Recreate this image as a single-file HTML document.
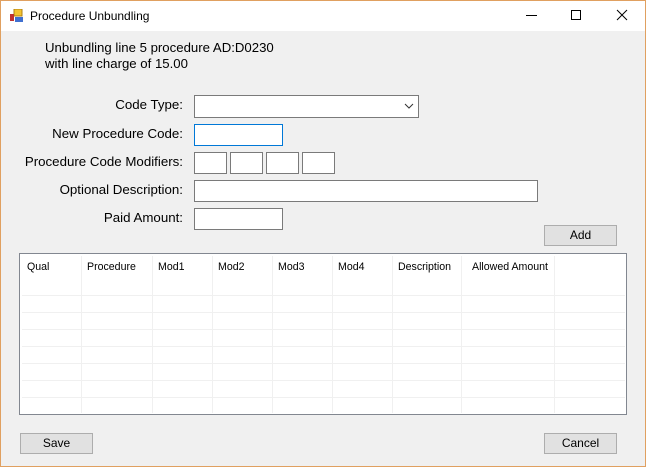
<!DOCTYPE html>
<html><head><style>
*{box-sizing:border-box;margin:0;padding:0}
body{width:646px;height:467px;background:#f0f0f0;font-family:"Liberation Sans",sans-serif;font-size:12px;color:#000;position:relative;overflow:hidden}
.a{position:absolute}
.frame{left:0;top:0;width:646px;height:467px;border:1px solid #e0a060;border-top-width:1px}
.title{left:1px;top:1px;width:644px;height:30px;background:#fff}
.lbl{position:absolute;right:463px;white-space:nowrap;font-size:13.3px}
.box{position:absolute;background:#fff;border:1px solid #7a7a7a}
.btn{position:absolute;background:#e1e1e1;border:1px solid #adadad;text-align:center;line-height:19px;font-size:12px}
.grid{left:19px;top:253px;width:608px;height:162px;background:#fff;border:1px solid #828790}
.h{position:absolute;top:7px;font-size:10.6px}
.vl{position:absolute;width:1px;background:#f0f0f0}
.hl{position:absolute;height:1px;background:#f0f0f0;left:2px;width:603px}
</style></head><body>
<div class="a title"></div>
<div class="a frame"></div>
<svg class="a" style="left:10px;top:9px" width="14" height="14" viewBox="0 0 14 14">
<rect x="4" y="0" width="8" height="7" fill="#f4c430" stroke="#b08010"/>
<rect x="0" y="5" width="4" height="7" fill="#c03030"/>
<rect x="5" y="8" width="8" height="5" fill="#4070d0"/>
</svg>
<div class="a" style="left:30px;top:9px;font-size:12px">Procedure Unbundling</div>
<div class="a" style="left:526px;top:15px;width:11px;height:1px;background:#000"></div>
<div class="a" style="left:571px;top:10px;width:10px;height:10px;border:1px solid #000"></div>
<svg class="a" style="left:616px;top:9px" width="12" height="12"><path d="M1 1L11 11M11 1L1 11" stroke="#000" stroke-width="1"/></svg>

<div class="a" style="left:45px;top:40px;font-size:13.2px;line-height:16px">Unbundling line 5 procedure AD:D0230<br>with line charge of 15.00</div>

<div class="lbl" style="top:97px">Code Type:</div>
<div class="box" style="left:194px;top:95px;width:225px;height:23px"></div>
<svg class="a" style="left:404px;top:103px" width="10" height="6"><path d="M1 1L5 5L9 1" stroke="#333" fill="none"/></svg>
<div class="lbl" style="top:126px">New Procedure Code:</div>
<div class="box" style="left:194px;top:124px;width:89px;height:22px;border-color:#0078d7"></div>
<div class="lbl" style="top:154px">Procedure Code Modifiers:</div>
<div class="box" style="left:194px;top:152px;width:33px;height:22px"></div>
<div class="box" style="left:230px;top:152px;width:33px;height:22px"></div>
<div class="box" style="left:266px;top:152px;width:33px;height:22px"></div>
<div class="box" style="left:302px;top:152px;width:33px;height:22px"></div>
<div class="lbl" style="top:182px">Optional Description:</div>
<div class="box" style="left:194px;top:180px;width:344px;height:22px"></div>
<div class="lbl" style="top:210px">Paid Amount:</div>
<div class="box" style="left:194px;top:208px;width:89px;height:22px"></div>

<div class="btn" style="left:544px;top:225px;width:73px;height:21px">Add</div>

<div class="a grid">
<div class="h" style="left:7px">Qual</div>
<div class="h" style="left:67px">Procedure</div>
<div class="h" style="left:138px">Mod1</div>
<div class="h" style="left:198px">Mod2</div>
<div class="h" style="left:258px">Mod3</div>
<div class="h" style="left:318px">Mod4</div>
<div class="h" style="left:378px">Description</div>
<div class="h" style="left:452px">Allowed Amount</div>
<div class="vl" style="left:61px;top:2px;height:157px"></div>
<div class="vl" style="left:132px;top:2px;height:157px"></div>
<div class="vl" style="left:192px;top:2px;height:157px"></div>
<div class="vl" style="left:252px;top:2px;height:157px"></div>
<div class="vl" style="left:312px;top:2px;height:157px"></div>
<div class="vl" style="left:372px;top:2px;height:157px"></div>
<div class="vl" style="left:441px;top:2px;height:157px"></div>
<div class="vl" style="left:534px;top:2px;height:157px"></div>
<div class="hl" style="top:41px"></div>
<div class="hl" style="top:58px"></div>
<div class="hl" style="top:75px"></div>
<div class="hl" style="top:92px"></div>
<div class="hl" style="top:109px"></div>
<div class="hl" style="top:126px"></div>
<div class="hl" style="top:143px"></div>
</div>

<div class="btn" style="left:20px;top:433px;width:73px;height:21px">Save</div>
<div class="btn" style="left:544px;top:433px;width:73px;height:21px">Cancel</div>
</body></html>
